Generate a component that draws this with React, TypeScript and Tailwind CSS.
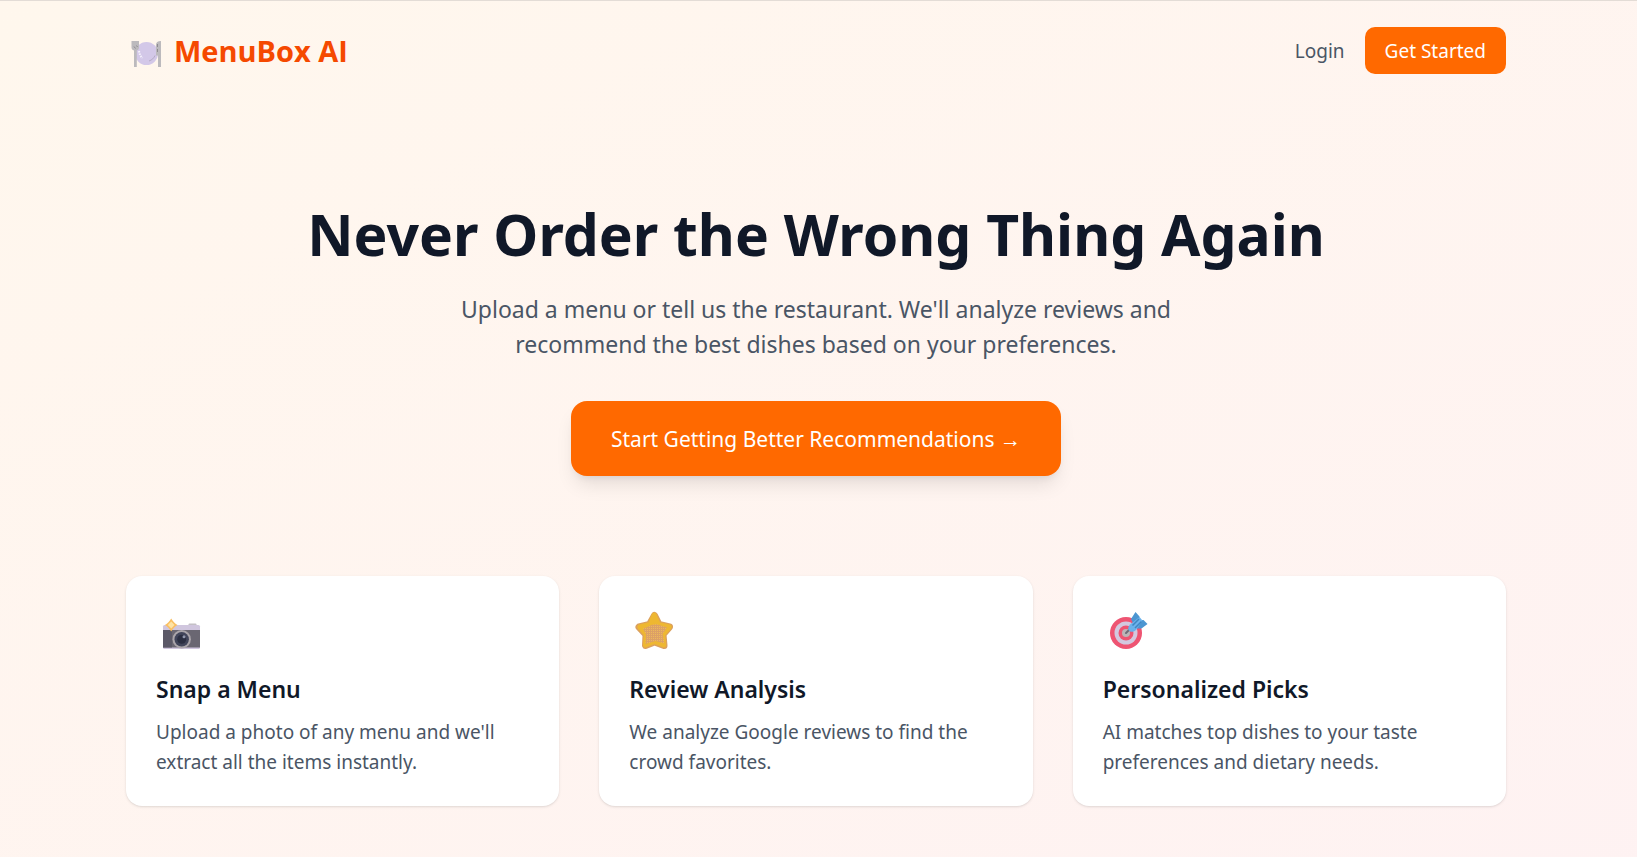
import type { ReactNode } from 'react'

type Feature = {
  title: string
  description: string
  icon: ReactNode
}

function PlateIcon() {
  return (
    <svg viewBox="0 0 40 40" className="h-10 w-10" aria-hidden="true">
      <circle cx="20.5" cy="22.5" r="11.5" fill="#d3c8e8" />
      <path d="M5.5 10h7.5v6.5c0 1.600-.9 2.600-2.200 3V36H8V19.500c-1.500-.4-2.500-1.400-2.500-3z" fill="#bcbabd" />
      <path d="M35 10v26h-3V24.500h-2V14c0-2.500 1.500-4 5-4z" fill="#bcbabd" />
      <path d="M8 15.500l1.500 2M10.500 14.500l1 1.500M31.500 13v3M31.500 18v3" stroke="#8f8b91" strokeWidth="1" />
      <path d="M13 20l1 4M14.500 25l2 2" stroke="#f6f2fc" strokeWidth="2" strokeDasharray="1.500 1" />
      <path d="M23 30c3-1 5-3 6-5.500" stroke="#b5abc4" strokeWidth="1" fill="none" />
    </svg>
  )
}

function CameraIcon() {
  return (
    <svg viewBox="0 0 50 50" className="h-[50px] w-[50px]" aria-hidden="true">
      <rect x="32.500" y="17.500" width="8" height="3" rx="1" fill="#c4c0c6" />
      <rect x="7" y="19" width="37" height="24" rx="1.500" fill="#d0c6de" />
      <rect x="7" y="24" width="37" height="17.500" fill="#6a6772" />
      <path d="M7 24h9v17.500H7z" fill="#5b5967" />
      <circle cx="25.700" cy="33.300" r="9.200" fill="#aaa5aa" />
      <circle cx="25.700" cy="33.300" r="7.200" fill="#41455a" />
      <circle cx="25.700" cy="33.300" r="4.500" fill="#2b2f42" />
      <circle cx="28" cy="30.800" r="1.500" fill="#9298ad" />
      <path d="M15.200 12.500c1.800 3 3.500 4.800 6.300 6.500-2.800 1.700-4.500 3.500-6.300 6.500-1.800-3-3.500-4.800-6.300-6.500 2.800-1.700 4.500-3.500 6.300-6.500z" fill="#f9bf62" />
      <path d="M15.200 15.500l3.300 3.500-3.300 3.500-3.300-3.500z" fill="#fee3a4" />
    </svg>
  )
}

function StarIcon() {
  return (
    <svg viewBox="0 0 50 50" className="h-[50px] w-[50px]" aria-hidden="true">
      <defs>
        <pattern id="star-grain" width="2" height="2" patternUnits="userSpaceOnUse">
          <rect width="2" height="2" fill="#dca066" />
          <rect width="1" height="1" fill="#eeb95c" />
        </pattern>
      </defs>
      <path
        d="M25.500 9.500l4.500 9 10.500 2.500-6.500 7.500 1 11-9.500-3.500-9 3.500.5-11-7-7.500 10.500-2.500z"
        fill="#dba05f"
        stroke="#dba05f"
        strokeWidth="7"
        strokeLinejoin="round"
      />
      <path
        d="M25.200 9l4 9.500 11 2.500-6.500 7.500 1 10.500-9.200-3.500-9 3.500.8-10.500-6.500-7.500 10.400-2.500z"
        fill="#eeb731"
        stroke="#eeb731"
        strokeWidth="5"
        strokeLinejoin="round"
      />
      <path d="M14 22.500c5-1 9-5 14.500-4l9.500 3-4.500 6.500 2 9.500-9-2.500-10 3 .5-9.500z" fill="url(#star-grain)" />
    </svg>
  )
}

function TargetIcon() {
  return (
    <svg viewBox="0 0 50 50" className="h-[50px] w-[50px]" aria-hidden="true">
      <circle cx="23" cy="27" r="16" fill="#ee5472" />
      <circle cx="23" cy="27" r="11.500" fill="#d3c8df" />
      <circle cx="23" cy="27" r="7.500" fill="#ee5472" />
      <circle cx="23" cy="27" r="4" fill="#bbb5b8" />
      <path d="M23 27l5-5" stroke="#6f6a78" strokeWidth="2" strokeLinecap="round" />
      <path d="M32.500 6l4 4.500v3.500h4l4 4-6 4.500h-6l-4.500-9.500z" fill="#4c96d1" />
      <path d="M36.500 11l3 3.500-6 9c-2.500 2.500-5 3-7 1.500s-1.500-4 .5-6.500z" fill="#6bb2eb" />
      <path d="M36 13l-6.500 6.500M38.500 15.500l-6.500 6.500" stroke="#3f86c3" strokeWidth="1.500" />
    </svg>
  )
}

const features: Feature[] = [
  {
    title: 'Snap a Menu',
    description: "Upload a photo of any menu and we'll extract all the items instantly.",
    icon: <CameraIcon />,
  },
  {
    title: 'Review Analysis',
    description: 'We analyze Google reviews to find the crowd favorites.',
    icon: <StarIcon />,
  },
  {
    title: 'Personalized Picks',
    description: 'AI matches top dishes to your taste preferences and dietary needs.',
    icon: <TargetIcon />,
  },
]

function FeatureCard({ title, description, icon }: Feature) {
  return (
    <div className="rounded-2xl bg-white px-[30px] pt-[30px] pb-[29px] shadow-sm">
      <div className="mb-4">{icon}</div>
      <h3 className="mb-2.5 text-[23px] leading-[35px] font-semibold text-gray-900">{title}</h3>
      <p className="text-[19px] leading-[30px] text-gray-600">{description}</p>
    </div>
  )
}

export default function App() {
  return (
    <div className="min-h-screen border-t border-[#e3dcd6] bg-gradient-to-br from-orange-50 to-red-50 pr-[5px] font-['Noto_Sans','Open_Sans',sans-serif]">
      <div className="mx-auto max-w-[1440px] px-[30px]">
        <nav className="flex items-center justify-between pt-[26px] pb-[27px]">
          <a
            href="#"
            className="flex items-center gap-2 font-['Open_Sans','Noto_Sans',sans-serif] text-[29px] leading-10 font-bold text-[#f54900]"
          >
            <PlateIcon />
            MenuBox AI
          </a>
          <div className="flex items-baseline gap-5 text-[19px] leading-[27px]">
            <a href="#login" className="text-gray-600">
              Login
            </a>
            <a href="#signup" className="rounded-[10px] bg-[#ff6900] px-5 pt-[11px] pb-[9px] text-white">
              Get Started
            </a>
          </div>
        </nav>

        <section className="pt-[103px] pb-[100px] text-center">
          <h1 className="mb-7 text-[57px] leading-[60px] font-bold text-gray-900">
            Never Order the Wrong Thing Again
          </h1>
          <p className="mx-auto mb-[39px] max-w-[760px] text-[23px] leading-[35px] text-gray-600">
            Upload a menu or tell us the restaurant. We'll analyze reviews and recommend the best dishes based on your
            preferences.
          </p>
          <a
            href="#signup"
            className="inline-block rounded-2xl bg-[#ff6900] px-10 pt-[21px] pb-[19px] align-top text-[21px] leading-[35px] text-white shadow-[0_12px_19px_-4px_rgb(0_0_0/0.1),0_5px_8px_-5px_rgb(0_0_0/0.1)]"
          >
            Start Getting Better Recommendations →
          </a>
        </section>

        <section className="grid grid-cols-1 gap-10 pb-[50px] md:grid-cols-3">
          {features.map((feature) => (
            <FeatureCard key={feature.title} {...feature} />
          ))}
        </section>
      </div>
    </div>
  )
}
